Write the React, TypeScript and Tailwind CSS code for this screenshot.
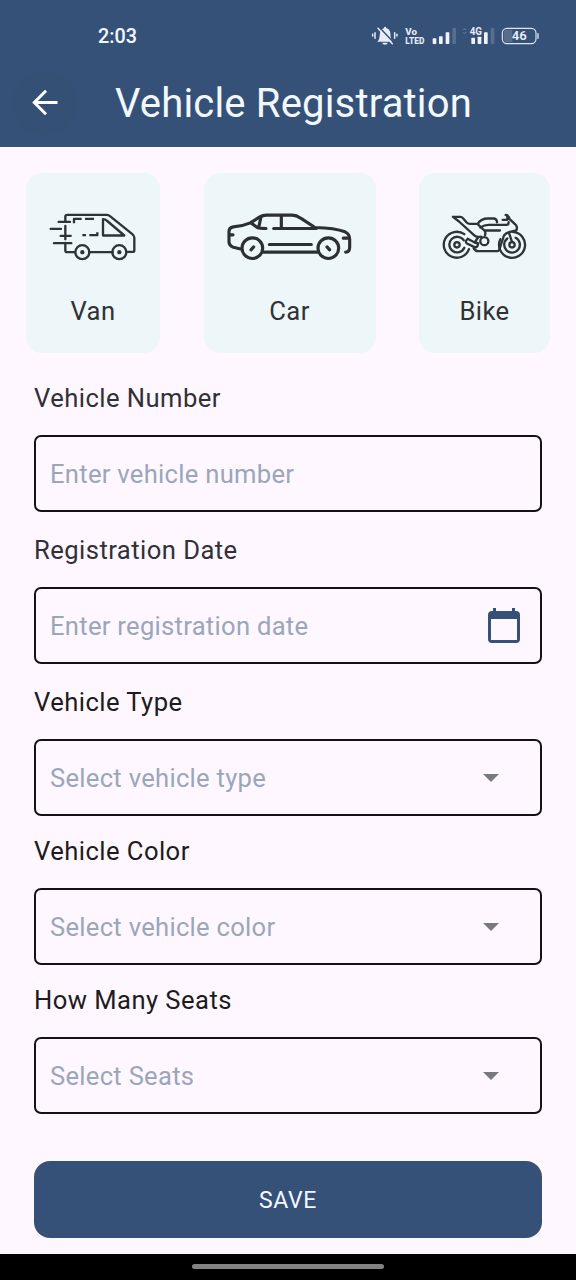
import type { ReactNode } from "react";

function StatusIcons() {
  return (
    <svg className="h-[45px] w-[190px]" viewBox="0 0 570 135" fill="none">
      <g stroke="#e6edf6" strokeWidth="4" strokeLinecap="round">
        <path d="M38 58v5M45 53v17M104 53v17M111 58v5" strokeWidth="4.5" />
        <path
          d="M51 80c9-5 7-15 9-25 1-9 5-14 12-15 0-6 7-6 7 0 7 1 11 6 12 15 1 10 0 20 9 25z M67 83a8 6 0 0 0 16 0z"
          fill="#e6edf6"
          stroke="none"
        />
        <path d="M58 37L100 82" stroke="#365178" strokeWidth="4.5" />
        <path d="M54 40L97 86" strokeWidth="4.5" />
      </g>
      <g fill="#e6edf6" fontFamily="Roboto, sans-serif" fontWeight="800">
        <text x="136" y="59" fontSize="25" textLength="35" lengthAdjust="spacingAndGlyphs">Vo</text>
        <text x="136" y="87" fontSize="26" textLength="57" lengthAdjust="spacingAndGlyphs">LTED</text>
        <text x="329" y="60" fontSize="30" textLength="37" lengthAdjust="spacingAndGlyphs" fontWeight="700">4G</text>
        <text x="455" y="76" fontSize="36" textLength="45" lengthAdjust="spacingAndGlyphs" fontWeight="600">46</text>
      </g>
      <g fill="#eef4fc">
        <rect x="218" y="70" width="11" height="17" rx="2" />
        <rect x="237" y="64" width="11" height="23" rx="2" />
        <rect x="257" y="52" width="11" height="35" rx="2" />
        <rect x="334" y="68" width="11" height="19" rx="2" />
        <rect x="353" y="65" width="11" height="22" rx="2" />
        <rect x="372" y="52" width="11" height="35" rx="2" />
      </g>
      <g fill="#566d90">
        <rect x="277" y="39" width="11" height="48" rx="2" />
        <rect x="392" y="39" width="11" height="48" rx="2" />
        <path d="M306 45l8-6 8 6zM306 52h16l-8 6z" />
      </g>
      <path d="M437 44h20v38h-20q-6-4-6-10V54q0-7 6-10z" fill="#566d90" />
      <rect x="427" y="40" width="101" height="46" rx="14" stroke="#dce5f0" strokeWidth="3.5" />
      <path d="M534 56v14" stroke="#dce5f0" strokeWidth="4" strokeLinecap="round" />
    </svg>
  );
}

function VanIcon() {
  return (
    <svg className="h-[50px] w-[90px]" viewBox="84 141.5 270 150" fill="none" stroke="#2d3338" strokeWidth="7" strokeLinecap="round" strokeLinejoin="round">
      <path d="M136 168v-12q0-6 6-6h119q5 0 9 4l67 54q6 5 6 11v37q0 5-5 5h-19M278 262h-70M165 262h-23q-6 0-6-6v-22M136 183v40" />
      <path d="M116 171h34M92 192h31M122 213h30M102 235h52" />
      <path d="M162 175v-13h23M195 162h27M187 211h11M208 211h24v-9" strokeLinecap="butt" />
      <path d="M249 163v49h64l-53-45q-4-4-11-4z" />
      <circle cx="187" cy="262" r="21" />
      <circle cx="298" cy="262" r="21" />
      <circle cx="187" cy="262" r="3" fill="#2d3338" />
      <circle cx="298" cy="262" r="3" fill="#2d3338" />
    </svg>
  );
}

function CarIcon() {
  return (
    <svg className="h-[50px] w-[126px]" viewBox="81 141.5 378 150" fill="none" stroke="#2d3033" strokeWidth="9.5" strokeLinecap="round" strokeLinejoin="round">
      <path d="M125 253l-25-6q-13-4-13-16v-30q0-13 13-15 28-2 51-12l27-17q10-6 22-6h76q14 0 26 9l43 28q60 1 90 13 14 6 14 22v24q0 14-12 15" />
      <path d="M190 262h162M208 239h126" />
      <path d="M155 176l17 12q7 3 26 3M183 156l-7 32M244 152v38M221 191h128M89 210h10M430 220h14" />
      <circle cx="157" cy="250" r="31" />
      <circle cx="385" cy="250" r="31" />
      <path d="M153 255l8-9M381 246l8 9" />
    </svg>
  );
}

function BikeIcon() {
  return (
    <svg className="h-[50px] w-[85px]" viewBox="97 141.5 255 150" fill="none" stroke="#2d3338" strokeWidth="7" strokeLinecap="round" strokeLinejoin="round">
      <path d="M164 208a39 39 0 1 0 14 45M162 226a23.500 23.500 0 1 0 2 23" />
      <circle cx="142" cy="240" r="8" />
      <path d="M272 223a39 39 0 1 0 37-22" />
      <path d="M293 221a23.500 23.500 0 1 0 25-2" />
      <circle cx="307" cy="240" r="8" />
      <path d="M130 156h22q5 0 8 4l11 13q4 4 10 4h23q10-16 31-16h17q8 0 10 9v2M130 156l18 14 45 41q5 5 12 5M288 150q9 2 12 13l19 18q5 6 1 16l-22 5q-10 3-15 10l-10 30q-4 17-10 17h-58q-8 0-13-9M204 178l20 19q5 4 2 14M212 188q12-8 25-8h53q7 0 7-8M224 197h47M279 165h14v-14M298 204l9 27" />
      <path d="M174 222l21 11 8-12q5-7 12-5M174 222q-10 9-2 14l21 10q8 4 11-4l1-6M195 233l11 3" />
      <circle cx="224" cy="229" r="12" />
    </svg>
  );
}

function CalendarIcon() {
  return (
    <svg className="mr-5 h-9 w-8" viewBox="0 0 32 36" fill="#365178">
      <path fillRule="evenodd" d="M5 0h3v3h16V0h3v3h1q4 0 4 4v24q0 4-4 4H4q-4 0-4-4V7q0-4 4-4h1zM3 11v21h26V11z" />
    </svg>
  );
}

function VehicleCard({ label, className, children }: { label: string; className: string; children: ReactNode }) {
  return (
    <button className={`flex h-[180px] flex-col items-center rounded-[16px] bg-[#edf6f8] pt-[39px] text-[25.6px] leading-[30px] tracking-[0.4px] text-[#303236] ${className}`}>
      {children}
      <span className="mt-[34px]">{label}</span>
    </button>
  );
}

function Field({ label, placeholder, kind, className }: { label: string; placeholder: string; kind?: "date" | "select"; className: string }) {
  return (
    <div className={className}>
      <div className={`h-[30px] text-[25.6px] leading-[30px] tracking-[0.45px] ${kind === "select" ? "text-[#1d1b20]" : "text-[#323036]"}`}>{label}</div>
      <div className="mt-[22px] flex h-[77px] items-center justify-between rounded-[7px] border-2 border-[#141218] pl-[14px] text-[25.6px] leading-[30px] tracking-[0.28px] text-[#9aa6ba]">
        <span className="pt-px">{placeholder}</span>
        {kind === "date" && <CalendarIcon />}
        {kind === "select" && (
          <svg className="mr-[41px] h-2 w-4" viewBox="0 0 16 8" fill="#7b7980">
            <path d="M0 0h16l-8 8z" />
          </svg>
        )}
      </div>
    </div>
  );
}

export default function App() {
  return (
    <div className="flex h-[1280px] w-[576px] flex-col bg-[#fef7ff] font-[Roboto,sans-serif]">
      <header className="h-[147px] shrink-0 bg-[#365178] text-[#f2f8ff]">
        <div className="flex h-[60px] items-end justify-between pr-[26px] pl-[98px]">
          <span className="mb-[11px] text-[19.800px] leading-6 font-medium">2:03</span>
          <StatusIcons />
        </div>
        <div className="flex h-[86px] items-center pl-[13px]">
          <button className="flex size-16 items-center justify-center rounded-full bg-[#345075]">
            <svg className="size-[26px]" viewBox="0.5 0.5 26 26" fill="none" stroke="#fff" strokeWidth="3">
              <path d="M26 13H3M14.500 1.300L2.800 13l11.700 11.700" />
            </svg>
          </button>
          <h1 className="mt-0.5 ml-[38px] text-[40px] leading-[48px] tracking-[0.18px] whitespace-nowrap">Vehicle Registration</h1>
        </div>
      </header>
      <main className="flex-1">
        <div className="flex justify-between px-[26px] pt-[26px]">
          <VehicleCard label="Van" className="w-[134px]"><VanIcon /></VehicleCard>
          <VehicleCard label="Car" className="w-[172px]"><CarIcon /></VehicleCard>
          <VehicleCard label="Bike" className="w-[131px]"><BikeIcon /></VehicleCard>
        </div>
        <div className="px-[34px]">
          <Field className="mt-[30px]" label="Vehicle Number" placeholder="Enter vehicle number" />
          <Field className="mt-[23px]" label="Registration Date" placeholder="Enter registration date" kind="date" />
          <Field className="mt-[23px]" label="Vehicle Type" placeholder="Select vehicle type" kind="select" />
          <Field className="mt-5" label="Vehicle Color" placeholder="Select vehicle color" kind="select" />
          <Field className="mt-5" label="How Many Seats" placeholder="Select Seats" kind="select" />
          <button className="mt-[47.4px] flex h-[77px] w-full items-center justify-center rounded-[16px] bg-[#365178] pt-[3px] text-[23px] tracking-[0.7px] text-[#f2f8ff]">SAVE</button>
        </div>
      </main>
      <footer className="flex h-[26px] shrink-0 justify-center bg-black pt-[10px]">
        <div className="h-[5px] w-48 rounded-full bg-[#828282]" />
      </footer>
    </div>
  );
}
